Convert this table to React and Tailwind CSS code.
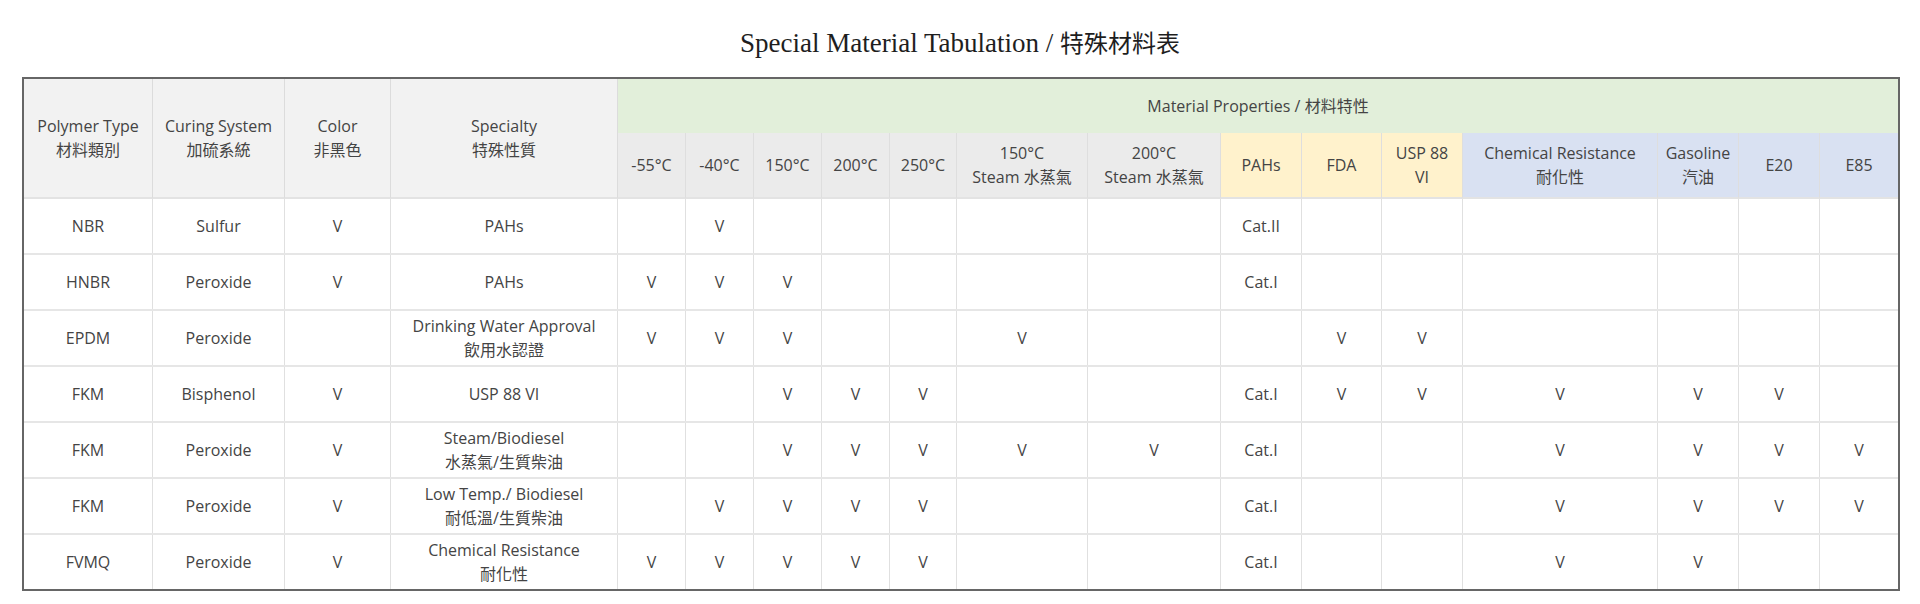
const COLS = 'grid grid-cols-[129px_132px_106px_227px_68px_68px_68px_68px_67px_131px_133px_81px_80px_81px_195px_81px_81px_78px]'

const subHeads = [
  { label: '-55°C', bg: 'bg-[#ebebeb]' },
  { label: '-40°C', bg: 'bg-[#ebebeb]' },
  { label: '150°C', bg: 'bg-[#ebebeb]' },
  { label: '200°C', bg: 'bg-[#ebebeb]' },
  { label: '250°C', bg: 'bg-[#ebebeb]' },
  { label: ['150°C', 'Steam 水蒸氣'], bg: 'bg-[#ebebeb]' },
  { label: ['200°C', 'Steam 水蒸氣'], bg: 'bg-[#ebebeb]' },
  { label: 'PAHs', bg: 'bg-[#fff2cc]' },
  { label: 'FDA', bg: 'bg-[#fff2cc]' },
  { label: ['USP 88', 'VI'], bg: 'bg-[#fff2cc]' },
  { label: ['Chemical Resistance', '耐化性'], bg: 'bg-[#d9e1f2]' },
  { label: ['Gasoline', '汽油'], bg: 'bg-[#d9e1f2]' },
  { label: 'E20', bg: 'bg-[#d9e1f2]' },
  { label: 'E85', bg: 'bg-[#d9e1f2]' },
]

const V = 'V'
const rows = [
  ['NBR', 'Sulfur', V, 'PAHs', '', V, '', '', '', '', '', 'Cat.II', '', '', '', '', '', ''],
  ['HNBR', 'Peroxide', V, 'PAHs', V, V, V, '', '', '', '', 'Cat.I', '', '', '', '', '', ''],
  ['EPDM', 'Peroxide', '', ['Drinking Water Approval', '飲用水認證'], V, V, V, '', '', V, '', '', V, V, '', '', '', ''],
  ['FKM', 'Bisphenol', V, 'USP 88 VI', '', '', V, V, V, '', '', 'Cat.I', V, V, V, V, V, ''],
  ['FKM', 'Peroxide', V, ['Steam/Biodiesel', '水蒸氣/生質柴油'], '', '', V, V, V, V, V, 'Cat.I', '', '', V, V, V, V],
  ['FKM', 'Peroxide', V, ['Low Temp./ Biodiesel', '耐低溫/生質柴油'], '', V, V, V, V, '', '', 'Cat.I', '', '', V, V, V, V],
  ['FVMQ', 'Peroxide', V, ['Chemical Resistance', '耐化性'], V, V, V, V, V, '', '', 'Cat.I', '', '', V, V, '', ''],
]

function Lines({ value }) {
  if (Array.isArray(value)) {
    return (
      <div>
        {value.map(l => <div key={l}>{l}</div>)}
      </div>
    )
  }
  return value
}

export default function App() {
  return (
    <div className="w-[1920px] h-[604px] bg-white font-['Open_Sans','Noto_Sans_CJK_TC',sans-serif] text-[16px] leading-[24px] text-[#444]">
      <h1 className="pt-[27px] h-[77px] text-center font-['Liberation_Serif','Noto_Sans_CJK_TC',serif] text-[27px] leading-[32px] text-[#1e1e1e]">
        Special Material Tabulation / <span className="text-[24px]">特殊材料表</span>
      </h1>

      <div className="ml-[22px] w-[1878px] border-2 border-[#666]">
        {/* header */}
        <div className={`${COLS} grid-rows-[54px_66px]`}>
          {[
            ['Polymer Type', '材料類別'],
            ['Curing System', '加硫系統'],
            ['Color', '非黑色'],
            ['Specialty', '特殊性質'],
          ].map(h => (
            <div key={h[0]} className="row-span-2 flex items-center justify-center text-center bg-[#f2f2f2] border-r border-r-[#dcdcdc] border-b-2 border-b-[#e3e3e3]">
              <Lines value={h} />
            </div>
          ))}
          <div className="col-span-14 flex items-center justify-center bg-[#e2efda]">
            Material Properties / 材料特性
          </div>
          {subHeads.map((s, i) => (
            <div key={i}
              className={`flex items-center justify-center text-center ${s.bg} border-b-2 border-b-[#e3e3e3] ${i < subHeads.length - 1 ? 'border-r border-r-[#dedede]' : ''}`}>
              <Lines value={s.label} />
            </div>
          ))}
        </div>

        {/* body */}
        {rows.map((r, ri) => (
          <div key={ri} className={`${COLS} ${ri < rows.length - 1 ? 'h-[56px] border-b-2 border-[#e6e6e6]' : 'h-[54px]'}`}>
            {r.map((c, ci) => (
              <div key={ci}
                className={`flex items-center justify-center text-center ${ci < r.length - 1 ? 'border-r border-[#e0e0e0]' : ''}`}>
                <Lines value={c} />
              </div>
            ))}
          </div>
        ))}
      </div>
    </div>
  )
}
